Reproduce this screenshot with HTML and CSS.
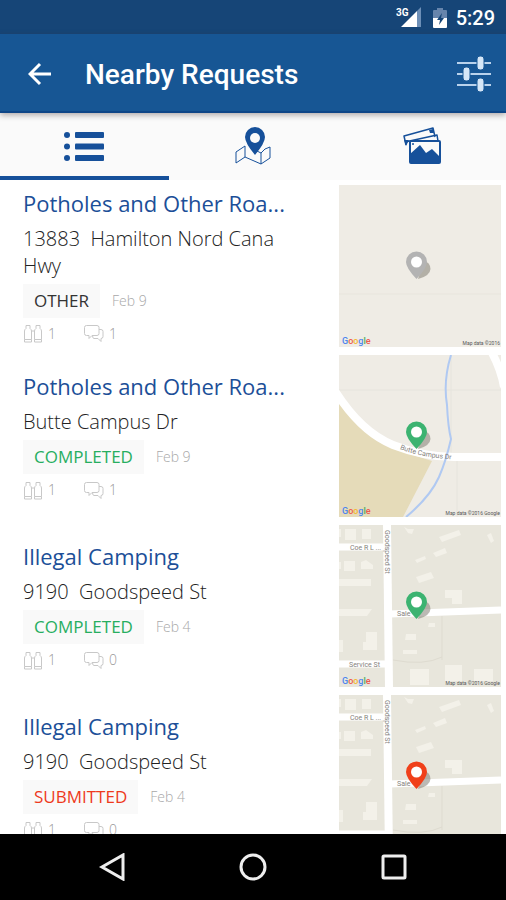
FILE: index.html
```html
<!DOCTYPE html>
<html lang="en">
<head>
<meta charset="utf-8">
<meta name="viewport" content="width=device-width, initial-scale=1">
<title>Nearby Requests</title>
<link rel="stylesheet" href="styles.css">
</head>
<body>
<svg class="defs" aria-hidden="true">
  <symbol id="watchers" viewBox="0 0 19 19">
    <path d="M1 15.500V7Q1 5.500 2.500 4.500V1.500H6.500V4.500Q8 5.500 8 7V15.500ZM1 15.500V18H8V15.500M11 15.500V7Q11 5.500 12.500 4.500V1.500H16.500V4.500Q18 5.500 18 7V15.500ZM11 15.500V18H18V15.500M8 7H11" fill="none" stroke="currentColor"/>
  </symbol>
  <symbol id="comments" viewBox="0 0 20 19">
    <path d="M5 11.500H2.500Q.5 11.500 .5 9.500V3.500Q.5 1.500 2.500 1.500H13Q15 1.500 15 3.500V9.500Q15 11.500 13 11.500H8L5 14.500ZM15 5.500H17Q19 5.500 19 7.500V12.500Q19 14.500 17 14.500V17.500L14 14.500H10Q8.500 14.500 8.500 11.500" fill="none" stroke="currentColor"/>
  </symbol>
  <symbol id="pin" viewBox="0 0 28 30">
    <path d="M13 28Q25 25 25.500 18Q25 11 19 10Z" fill="#77736a" opacity=".5"/>
    <path d="M11.500 28Q1 17 1 11A10.500 10.500 0 0 1 22 11Q22 17 11.500 28Z" fill="currentColor"/>
    <circle cx="11.500" cy="11" r="5.500" fill="#fff"/>
  </symbol>
  <symbol id="streets" viewBox="0 0 162 162">
    <rect width="162" height="162" fill="#e8e6dc"/>
    <path d="M0 22H46M0 139H50" stroke="#fff" stroke-width="7"/>
    <path d="M48 0L50 162" stroke="#fff" stroke-width="8"/>
    <path d="M51 89L162 85" stroke="#fff" stroke-width="7"/>
    <g fill="#f3f1e9">
      <path d="M6 4H17V15H6ZM23 4H32V14H23ZM0 4H2V12H0ZM5 36H16V46H5ZM22 37L27 35L34 40V44H22ZM0 37H2V44H0ZM0 54H32V61H0ZM0 84H33L28 91H0ZM27 107H38V125H24V117H27ZM0 115H4V127H0Z"/>
      <path d="M65 2L69 4L75 4L73 9L69 8ZM100 12L120 5L122 10L103 17ZM94 28L106 23L108 28L97 32ZM76 35L86 31L87 34L78 38ZM77 52L92 47L95 53L80 58ZM148 10L152 8L155 16L152 18ZM106 65H123V79H113V73H106ZM90 98H96V102H89ZM67 109H77V115H66ZM64 125H78V129H64ZM71 144H90V160H71ZM106 140H123V156H106ZM135 144H154V156H135Z"/>
    </g>
    <path d="M103 91V135M54 135Q85 141 103 132" fill="none" stroke="#dedbd0"/>
  </symbol>
</svg>
<div class="app">
  <div class="status">
    <svg class="signal" viewBox="0 0 28 22" aria-hidden="true">
      <path d="M5 20L21 4V20Z" fill="#fff"/>
      <path d="M21 4L25 0V20H21Z" fill="#6d8fb7"/>
      <text x="0" y="9" class="network">3G</text>
    </svg>
    <svg class="battery" viewBox="0 0 14 20" aria-hidden="true">
      <path d="M0 3Q0 2 1 2H4V0H10V2H13Q14 2 14 3V11H0Z" fill="#6785ac"/>
      <path d="M0 10H14V19Q14 20 13 20H1Q0 20 0 19Z" fill="#fff"/>
      <path d="M9 5L4 12H7L6 17L11 10H8Z" fill="#164577"/>
    </svg>
    <time>5:29</time>
  </div>
  <header class="bar">
    <button class="icon-button" aria-label="Back">
      <svg width="24" height="24" viewBox="0 0 24 24"><path d="M23 12H3M12 2L2 12L12 22" fill="none" stroke="#fff" stroke-width="3"/></svg>
    </button>
    <h1>Nearby Requests</h1>
    <button class="icon-button" aria-label="Filter">
      <svg width="36" height="38" viewBox="0 0 36 38"><g stroke="#b9d2ec" stroke-width="2"><path d="M1 8H35M1 19H35M1 30H35"/></g><g fill="#d5e6f7" stroke="#175694"><rect x="21" y="1" width="7" height="14" rx="3"/><rect x="7" y="12" width="7" height="14" rx="3"/><rect x="21" y="23" width="7" height="14" rx="3"/></g></svg>
    </button>
  </header>
  <nav class="tabs">
    <button class="tab active" aria-label="List">
      <svg width="42" height="40" viewBox="0 0 42 40" fill="#16509a"><circle cx="4" cy="9" r="3"/><circle cx="4" cy="20.500" r="3"/><circle cx="4" cy="32" r="3"/><rect x="12" y="6" width="29" height="6" rx="1"/><rect x="12" y="17.500" width="29" height="6" rx="1"/><rect x="12" y="29" width="29" height="6" rx="1"/></svg>
    </button>
    <button class="tab" aria-label="Map">
      <svg width="42" height="40" viewBox="0 0 42 40"><path d="M13 20L4 26V37L13 31L29 38L38 32V21L33 23M13 20V31M29 38V27L25 25M29 27L33 23" fill="none" stroke="#16509a" stroke-linejoin="round"/><path d="M23 29Q13 17 13 11A10 10 0 0 1 33 11Q33 17 23 29Z" fill="#16509a"/><circle cx="23" cy="12" r="5" fill="#fafafa"/></svg>
    </button>
    <button class="tab" aria-label="Photos">
      <svg width="42" height="40" viewBox="0 0 42 40"><path d="M5 19L3 10L32 2L34 11M4 16L36 9L37 15" fill="none" stroke="#16509a" stroke-width="1.500" stroke-linejoin="round"/><path d="M3 14L8 14L5 20ZM28 4L32 3L33 7L29 7Z" fill="#16509a"/><rect x="9" y="15" width="30" height="22" rx="1" fill="#fafafa" stroke="#16509a" stroke-width="2"/><path d="M9 28L19 19L25 27L31 23L39 31V37H9Z" fill="#16509a"/><circle cx="12" cy="18" r="1" fill="#16509a"/></svg>
    </button>
  </nav>
  <main class="list">
    <article class="request">
      <div class="info">
        <h2><a href="#">Potholes and Other Roa...</a></h2>
        <p class="address">13883&nbsp; Hamilton Nord Cana Hwy</p>
        <p class="state"><span class="badge">OTHER</span><time>Feb 9</time></p>
        <p class="counts"><span><svg class="count-icon"><use href="#watchers"/></svg>1</span><span><svg class="count-icon"><use href="#comments"/></svg>1</span></p>
      </div>
      <svg class="map other" viewBox="0 0 162 162" role="img" aria-label="Map">
        <rect width="162" height="162" fill="#efece5"/>
        <path d="M0 109H162" stroke="#e8e5dd"/>
        <use href="#pin" x="66" y="66" width="28" height="30"/>
        <text x="3" y="159" class="logo-text"><tspan fill="#4d86ee">G</tspan><tspan fill="#ed5b4f">o</tspan><tspan fill="#f3b832">o</tspan><tspan fill="#4d86ee">g</tspan><tspan fill="#4caf61">l</tspan><tspan fill="#ed5b4f">e</tspan></text>
        <text class="credit" x="161" y="160">Map data ©2016</text>
      </svg>
    </article>
    <article class="request">
      <div class="info">
        <h2><a href="#">Potholes and Other Roa...</a></h2>
        <p class="address">Butte Campus Dr</p>
        <p class="state"><span class="badge completed">COMPLETED</span><time>Feb 9</time></p>
        <p class="counts"><span><svg class="count-icon"><use href="#watchers"/></svg>1</span><span><svg class="count-icon"><use href="#comments"/></svg>1</span></p>
      </div>
      <svg class="map completed" viewBox="0 0 162 162" role="img" aria-label="Map">
        <rect width="162" height="162" fill="#efece5"/>
        <path d="M0 35H162M112 0V98M118 104V162" fill="none" stroke="#e6e4dd"/>
        <path d="M0 42Q25 84 62 96L93 106L64 162H0Z" fill="#e5dbb9"/>
        <path d="M-4 36Q22 77 54 90Q85 102 115 102H162M152 -4Q162 14 165 32" fill="none" stroke="#fff" stroke-width="8"/>
        <path d="M112 0Q104 26 108 50Q109 72 112 84Q107 106 100 122Q91 142 67 162" fill="none" stroke="#b0c9f2" stroke-width="2"/>
        <path id="butte" d="M61 94Q82 103 122 105" fill="none"/>
        <text class="street-name"><textPath href="#butte">Butte Campus Dr</textPath></text>
        <use href="#pin" x="66" y="66" width="28" height="30"/>
        <text x="3" y="159" class="logo-text"><tspan fill="#4d86ee">G</tspan><tspan fill="#ed5b4f">o</tspan><tspan fill="#f3b832">o</tspan><tspan fill="#4d86ee">g</tspan><tspan fill="#4caf61">l</tspan><tspan fill="#ed5b4f">e</tspan></text>
        <text class="credit" x="161" y="160">Map data ©2016 Google</text>
      </svg>
    </article>
    <article class="request">
      <div class="info">
        <h2><a href="#">Illegal Camping</a></h2>
        <p class="address">9190&nbsp; Goodspeed St</p>
        <p class="state"><span class="badge completed">COMPLETED</span><time>Feb 4</time></p>
        <p class="counts"><span><svg class="count-icon"><use href="#watchers"/></svg>1</span><span><svg class="count-icon"><use href="#comments"/></svg>0</span></p>
      </div>
      <svg class="map completed" viewBox="0 0 162 162" role="img" aria-label="Map">
        <use href="#streets" width="162" height="162"/>
        <g class="street-name">
          <text x="11" y="25">Coe R L ...</text>
          <text x="10" y="142">Service St</text>
          <text x="58" y="91">Sale</text>
          <text transform="translate(46 5) rotate(90)">Goodspeed St</text>
        </g>
        <use href="#pin" x="66" y="66" width="28" height="30"/>
        <text x="3" y="159" class="logo-text"><tspan fill="#4d86ee">G</tspan><tspan fill="#ed5b4f">o</tspan><tspan fill="#f3b832">o</tspan><tspan fill="#4d86ee">g</tspan><tspan fill="#4caf61">l</tspan><tspan fill="#ed5b4f">e</tspan></text>
        <text class="credit" x="161" y="160">Map data ©2016 Google</text>
      </svg>
    </article>
    <article class="request">
      <div class="info">
        <h2><a href="#">Illegal Camping</a></h2>
        <p class="address">9190&nbsp; Goodspeed St</p>
        <p class="state"><span class="badge submitted">SUBMITTED</span><time>Feb 4</time></p>
        <p class="counts"><span><svg class="count-icon"><use href="#watchers"/></svg>1</span><span><svg class="count-icon"><use href="#comments"/></svg>0</span></p>
      </div>
      <svg class="map submitted" viewBox="0 0 162 162" role="img" aria-label="Map">
        <use href="#streets" width="162" height="162"/>
        <g class="street-name">
          <text x="11" y="25">Coe R L ...</text>
          <text x="58" y="91">Sale</text>
          <text transform="translate(46 5) rotate(90)">Goodspeed St</text>
        </g>
        <use href="#pin" x="66" y="66" width="28" height="30"/>
      </svg>
    </article>
  </main>
  <footer class="system">
    <button aria-label="Back"><svg width="28" height="28" viewBox="0 0 28 28"><path d="M25 2V26L4 14Z"/></svg></button>
    <button aria-label="Home"><svg width="28" height="28" viewBox="0 0 28 28"><circle cx="14" cy="14" r="12"/></svg></button>
    <button aria-label="Recent apps"><svg width="28" height="28" viewBox="0 0 28 28"><rect x="3" y="3" width="22" height="22" rx="1"/></svg></button>
  </footer>
</div>
</body>
</html>
```
FILE: styles.css
```css
* { box-sizing: border-box; }
body {
  margin: 0;
  font-family: "Open Sans", sans-serif;
  background: #fff;
}
h1, h2, p { margin: 0; }
svg { display: block; }
button {
  display: grid;
  place-items: center;
  padding: 0;
  border: 0;
  background: none;
}
.defs { display: none; }
.app {
  display: flex;
  flex-direction: column;
  height: 100vh;
  overflow: hidden;
}
.status {
  flex: none;
  display: flex;
  align-items: center;
  justify-content: flex-end;
  gap: 9px;
  height: 34px;
  padding: 2px 11px 0 0;
  background: #164577;
  color: #fff;
  font: 500 20px/24px Roboto, sans-serif;
}
.signal { width: 28px; height: 22px; }
.battery { width: 14px; height: 20px; }
.network { font: 700 10px Roboto, sans-serif; fill: #fff; }
.bar {
  flex: none;
  position: relative;
  display: flex;
  align-items: center;
  height: 79px;
  padding: 2px 14px 0 28px;
  background: #175694;
  border-bottom: 2px solid #0f4687;
  box-shadow: 0 2px 6px rgba(60, 40, 40, .4);
}
.bar h1 {
  flex: 1;
  margin-left: 33px;
  padding-top: 2px;
  color: #fff;
  font: 500 28px/32px Roboto, sans-serif;
}
.tabs {
  flex: none;
  display: grid;
  grid-template-columns: repeat(3, 1fr);
  height: 67px;
  background: #fafafa;
}
.tab { border-bottom: 4px solid transparent; padding-top: 2px; }
.tab.active { border-bottom-color: #16509a; }
.list {
  flex: 1;
  min-height: 0;
  overflow: hidden;
  display: flex;
  flex-direction: column;
  gap: 8px;
  padding: 5px 5px 0 23px;
}
.request {
  flex: none;
  display: flex;
  align-items: center;
  gap: 40px;
}
.info { flex: 1; min-width: 0; }
.info h2 {
  margin-bottom: 6px;
  font-size: 22px;
  line-height: 32px;
  font-weight: 400;
  white-space: nowrap;
}
.info a { color: #1c4f98; text-decoration: none; }
.address {
  margin-bottom: 5px;
  color: #222;
  font-size: 20px;
  font-weight: 300;
  line-height: 27px;
}
.state {
  display: flex;
  align-items: center;
  gap: 12px;
  margin-bottom: 4px;
}
.badge {
  padding: 0 11px;
  background: #f9f9f9;
  color: #333;
  font-size: 17px;
  line-height: 34px;
}
.badge.completed { color: #27ae60; }
.badge.submitted { color: #ee3a1d; }
.state time { color: #a8a8a8; font-size: 14px; font-weight: 300; line-height: 20px; }
.counts {
  display: flex;
  gap: 28px;
  color: #999;
  font-size: 14px;
  font-weight: 300;
  line-height: 24px;
}
.counts span { display: flex; align-items: center; gap: 5px; }
.count-icon { width: 20px; height: 19px; color: #c8c8c8; }
.map { flex: none; width: 162px; height: 162px; }
.map.other { color: #b3b3b3; }
.map.completed { color: #3cb371; }
.map.submitted { color: #f0401a; }
.logo-text { font: 500 9px Roboto, sans-serif; }
.credit { font: 5px Roboto, sans-serif; fill: #555; text-anchor: end; }
.street-name { font: 7px Roboto, sans-serif; fill: #85827c; }
.system {
  flex: none;
  display: flex;
  align-items: center;
  justify-content: space-between;
  height: 66px;
  padding: 0 98px;
  background: #000;
}
.system svg { fill: none; stroke: #eee; stroke-width: 3px; }
```
